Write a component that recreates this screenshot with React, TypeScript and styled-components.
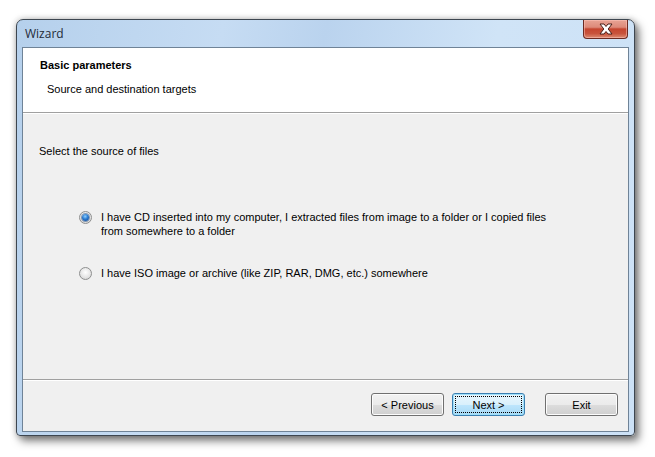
import React, { useState } from "react";
import styled, { createGlobalStyle } from "styled-components";

const GlobalStyle = createGlobalStyle`
  html, body {
    margin: 0;
    padding: 0;
    background: #ffffff;
  }
  body {
    font-family: "Liberation Sans", Arial, sans-serif;
    font-size: 11px;
    color: #000;
  }
`;

const Page = styled.div`
  width: 655px;
  height: 457px;
  padding: 19px 0 0 16px;
  box-sizing: border-box;
`;

const Frame = styled.div`
  width: 619px;
  height: 417px;
  box-sizing: border-box;
  border: 1px solid #3d4650;
  border-radius: 7px 7px 4px 4px;
  background: linear-gradient(100deg, #b5d0ec 0%, #c6dcf3 30%, #bad3ee 45%, #d0e4f7 70%, #cce1f6 100%);
  box-shadow: 4px 5px 9px rgba(0, 0, 0, 0.5), 0 0 6px rgba(0, 0, 0, 0.25);
  display: flex;
  flex-direction: column;
  padding: 0 5px 3px 5px;
`;

const TitleBar = styled.div`
  height: 27px;
  display: flex;
  align-items: flex-start;
  justify-content: space-between;
`;

const Title = styled.span`
  font-family: "Open Sans", "Liberation Sans", sans-serif;
  font-size: 12px;
  color: #1e2a38;
  margin: 5px 0 0 3px;
`;

const CloseButton = styled.div`
  width: 45px;
  height: 19px;
  margin-right: 1px;
  box-sizing: border-box;
  border: 1px solid #6b2a22;
  border-top: none;
  border-radius: 0 0 4px 4px;
  background: linear-gradient(
    180deg,
    #e8a394 0%,
    #dd8a7a 40%,
    #c5452f 50%,
    #c8533c 75%,
    #dc8b72 100%
  );
  box-shadow: inset 0 0 0 1px rgba(255, 200, 190, 0.5);
  display: flex;
  align-items: center;
  justify-content: center;
`;

const Client = styled.div`
  flex: 1;
  border: 1px solid #6f8397;
  background: #f0f0f0;
  display: flex;
  flex-direction: column;
`;

const Header = styled.div`
  height: 65px;
  background: #ffffff;
  border-bottom: 1px solid #a0a0a0;
  box-sizing: border-box;
  padding: 11px 0 0 17px;
`;

const HeaderTitle = styled.div`
  font-weight: bold;
  line-height: 13px;
`;

const HeaderSub = styled.div`
  line-height: 13px;
  margin: 11px 0 0 7px;
`;

const Body = styled.div`
  flex: 1;
  border-top: 1px solid #ffffff;
  border-bottom: 1px solid #a0a0a0;
  padding: 31px 0 0 16px;
`;

const Prompt = styled.div`
  line-height: 13px;
`;

const Options = styled.div`
  margin: 52px 0 0 40px;
  display: flex;
  flex-direction: column;
  gap: 28px;
`;

const Option = styled.label`
  display: flex;
  align-items: flex-start;
  gap: 9px;
  cursor: default;
`;

const RadioCircle = styled.span<{ $checked: boolean }>`
  flex: none;
  width: 13px;
  height: 13px;
  margin-top: 1px;
  box-sizing: border-box;
  border-radius: 50%;
  border: 1px solid #8e8f8f;
  background: radial-gradient(circle at 50% 40%, #ffffff 0%, #e6e6e6 55%, #cfcfcf 100%);
  display: flex;
  align-items: center;
  justify-content: center;
  &::after {
    content: "";
    width: 7px;
    height: 7px;
    border-radius: 50%;
    display: ${(p) => (p.$checked ? "block" : "none")};
    background: radial-gradient(circle at 45% 35%, #8fd0ff 0%, #2b7bd0 45%, #0d3f8a 100%);
    box-shadow: 0 0 0 1px rgba(30, 70, 120, 0.5);
  }
`;

const OptionText = styled.span`
  line-height: 14px;
  width: 460px;
`;

const Footer = styled.div`
  height: 51px;
  border-top: 1px solid #ffffff;
  box-sizing: border-box;
  display: flex;
  justify-content: flex-end;
  align-items: flex-start;
  padding: 12px 10px 0 0;
`;

const Button = styled.button<{ $default?: boolean; $gap?: number }>`
  width: 73px;
  height: 23px;
  margin-left: ${(p) => p.$gap ?? 0}px;
  box-sizing: border-box;
  font-family: "Liberation Sans", Arial, sans-serif;
  font-size: 11px;
  color: #000;
  border-radius: 3px;
  border: 1px solid ${(p) => (p.$default ? "#3c7fb1" : "#707070")};
  background: ${(p) =>
    p.$default
      ? "linear-gradient(180deg, #eaf6fd 0%, #d9f0fc 50%, #bee6fd 51%, #a7d9f5 100%)"
      : "linear-gradient(180deg, #f2f2f2 0%, #ebebeb 50%, #dddddd 51%, #cfcfcf 100%)"};
  box-shadow: inset 0 0 0 1px ${(p) => (p.$default ? "#9fe0fa" : "#fcfcfc")};
  padding: 0;
  position: relative;
  &::after {
    content: "";
    display: ${(p) => (p.$default ? "block" : "none")};
    position: absolute;
    inset: 2px;
    border: 1px dotted #000;
  }
`;

function CloseGlyph() {
  return (
    <svg width="16" height="12" viewBox="0 0 16 12">
      <path
        d="M2 1 H6 L8 3.5 L10 1 H14 L10.2 6 L14 11 H10 L8 8.5 L6 11 H2 L5.8 6 Z"
        fill="#ffffff"
        stroke="#4a1f18"
        strokeWidth="1"
        strokeLinejoin="round"
      />
    </svg>
  );
}

export default function App() {
  const [source, setSource] = useState(0);
  const options = [
    "I have CD inserted into my computer, I extracted files from image to a folder or I copied files from somewhere to a folder",
    "I have ISO image or archive (like ZIP, RAR, DMG, etc.) somewhere",
  ];

  return (
    <Page>
      <GlobalStyle />
      <Frame>
        <TitleBar>
          <Title>Wizard</Title>
          <CloseButton>
            <CloseGlyph />
          </CloseButton>
        </TitleBar>
        <Client>
          <Header>
            <HeaderTitle>Basic parameters</HeaderTitle>
            <HeaderSub>Source and destination targets</HeaderSub>
          </Header>
          <Body>
            <Prompt>Select the source of files</Prompt>
            <Options>
              {options.map((text, i) => (
                <Option key={i} onClick={() => setSource(i)}>
                  <RadioCircle $checked={source === i} />
                  <OptionText>{text}</OptionText>
                </Option>
              ))}
            </Options>
          </Body>
          <Footer>
            <Button>&lt; Previous</Button>
            <Button $default $gap={8}>
              Next &gt;
            </Button>
            <Button $gap={20}>Exit</Button>
          </Footer>
        </Client>
      </Frame>
    </Page>
  );
}
